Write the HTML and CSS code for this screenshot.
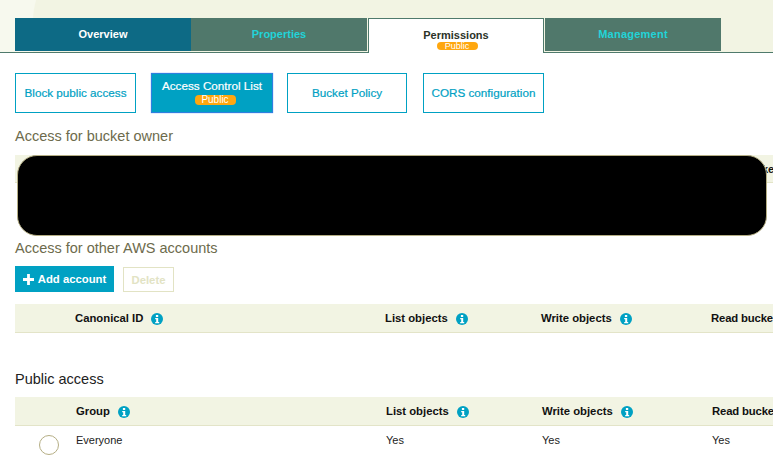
FILE: index.html
```html
<!DOCTYPE html>
<html lang="en">
<head>
<meta charset="utf-8">
<title>Permissions</title>
<link rel="stylesheet" href="styles.css">
</head>
<body>
<svg width="0" height="0" class="defs">
  <symbol id="info" viewBox="0 0 12 12">
    <circle cx="6" cy="6" r="6" fill="#00a1c3"/>
    <rect x="4.900" y="2" width="2.300" height="2" fill="#fff"/>
    <path d="M4.200 5h3v4h1v1.200H4.200V9h1V6.200H4.200z" fill="#fff"/>
  </symbol>
</svg>
<header class="band">
  <svg class="swirl" width="60" height="52" viewBox="0 0 60 52"><path d="M0 0h36C34 8 33 14 33 20V52H0z" fill="#f7f9ee"/></svg>
  <nav class="tabs">
    <a class="tab tab-blue">Overview</a>
    <a class="tab tab-green">Properties</a>
    <a class="tab tab-active">Permissions<span class="badge badge-tab">Public</span></a>
    <a class="tab tab-green tab-mgmt">Management</a>
  </nav>
</header>
<main class="content">
  <div class="subnav">
    <a class="sub sub-a">Block public access</a>
    <a class="sub sub-b sub-active">Access Control List<span class="badge">Public</span></a>
    <a class="sub sub-c">Bucket Policy</a>
    <a class="sub sub-d">CORS configuration</a>
  </div>

  <h2 class="title">Access for bucket owner</h2>
  <div class="owner">
    <div class="owner-head"><span class="owner-clip">ke</span></div>
    <div class="redact"></div>
  </div>

  <h2 class="title title-other">Access for other AWS accounts</h2>
  <div class="actions">
    <button class="btn btn-add"><svg class="plus" width="11" height="11" viewBox="0 0 11 11"><path d="M4.100 0h2.800v4.100H11v2.800H6.900V11H4.100V6.900H0V4.100h4.100z" fill="#fff"/></svg>Add account</button>
    <button class="btn btn-del">Delete</button>
  </div>
  <div class="grid grid-head">
    <span></span>
    <span class="th">Canonical ID<svg class="ico"><use href="#info"/></svg></span>
    <span class="th">List objects<svg class="ico"><use href="#info"/></svg></span>
    <span class="th">Write objects<svg class="ico"><use href="#info"/></svg></span>
    <span class="th th-clip">Read bucke</span>
  </div>

  <h2 class="title title-public">Public access</h2>
  <div class="grid grid-shift grid-head">
    <span></span>
    <span class="th">Group<svg class="ico"><use href="#info"/></svg></span>
    <span class="th">List objects<svg class="ico"><use href="#info"/></svg></span>
    <span class="th">Write objects<svg class="ico"><use href="#info"/></svg></span>
    <span class="th th-clip">Read bucke</span>
  </div>
  <div class="grid grid-shift grid-row">
    <span class="radio"></span>
    <span class="cell">Everyone</span>
    <span class="cell">Yes</span>
    <span class="cell">Yes</span>
    <span class="cell">Yes</span>
  </div>
</main>
</body>
</html>
```

FILE: styles.css
```css
* { box-sizing: border-box; }
html, body { margin: 0; height: 466px; overflow: hidden; background: #fff; }
body { font-family: "Liberation Sans", Arial, sans-serif; font-size: 11px; color: #111; }
.defs { position: absolute; }

.band { position: relative; height: 53px; background: #f2f4e3; border-bottom: 1px solid #4f7a6c; padding: 18px 0 0 15px; }
.swirl { position: absolute; left: 0; top: 0; }
.tabs { position: relative; display: flex; height: 35px; }
.tab { width: 176px; height: 33px; display: flex; flex-direction: column; align-items: center; padding-top: 10px; font-weight: 700; font-size: 11px; line-height: 13px; }
.tab-blue { background: #0d6a85; color: #fff; }
.tab-green { background: #50786b; color: #22d3d8; }
.tab-mgmt { letter-spacing: 0.25px; }
.tab-active { height: 35px; background: #fff; color: #2c3327; border: 1px solid #4f7a6c; border-bottom: 0; margin: 0 1px; width: 176px; padding-top: 10px; }

.badge { display: block; width: 41px; height: 8px; border-radius: 4px; background: #ffa70f; color: #fff; font-size: 9px; font-weight: 400; line-height: 8px; text-align: center; overflow: hidden; }
.badge-tab { margin-left: 2px; }

.content { padding: 20px 0 0 15px; width: 773px; overflow: hidden; }
.subnav { display: flex; height: 40px; }
.sub { height: 40px; border: 1px solid #00a1c3; color: #00a1c3; font-weight: 400; font-size: 11.700px; display: flex; flex-direction: column; align-items: center; justify-content: center; padding-bottom: 1px; -webkit-text-stroke: 0.2px #00a1c3; }
.sub-a { width: 121px; margin-right: 15px; }
.sub-b { width: 122px; margin-right: 14px; }
.sub-c { width: 120px; margin-right: 16px; }
.sub-d { width: 121px; }
.sub-active { background: #00a1c3; color: #fff; border-color: #2f7fe0; box-shadow: 0 0 1px #5a9cf0; -webkit-text-stroke: 0.2px #fff; padding-bottom: 3px; }
.sub-active .badge { -webkit-text-stroke: 0; margin: 3px 0 0 6px; height: 10px; line-height: 10px; font-size: 10px; }

.title { margin: 0; font-size: 14.500px; font-weight: 400; line-height: 16px; color: #6d6b4c; }
.subnav + .title { margin-top: 15px; }
.title-other { margin-top: 4px; }
.title-public { margin-top: 38px; color: #222; }

.owner { position: relative; height: 81px; margin-top: 11px; width: 758px; }
.owner-head { height: 28px; background: #f2f4e3; border-bottom: 1px solid #e3e4c8; overflow: hidden; }
.owner-clip { display: block; padding: 8px 0 0 747px; font-weight: 700; white-space: nowrap; }
.redact { position: absolute; left: 2px; top: 0; width: 750px; height: 81px; background: #000; border: 1px solid #b5ae84; border-radius: 20px; }

.actions { display: flex; align-items: flex-start; gap: 9px; margin-top: 10px; height: 26px; }
.btn { font: 700 11.300px "Liberation Sans", Arial, sans-serif; padding: 0; margin: 0; display: flex; align-items: center; justify-content: center; }
.btn-add { width: 99px; height: 26px; background: #00a1c3; color: #fff; border: 0; gap: 4px; }
.btn-del { width: 51px; height: 25px; margin-top: 1px; background: #fff; color: #e2e3c4; border: 1px solid #e2e3c4; }

.grid { display: grid; grid-template-columns: 60px 310px 156px 170px 1fr; align-items: center; white-space: nowrap; width: 758px; }
.grid-head { height: 29px; background: #f2f4e3; border-bottom: 1px solid #e3e4c8; margin-top: 12px; }
.grid-shift { grid-template-columns: 61px 310px 156px 170px 1fr; }
.title-public + .grid-head { margin-top: 10px; }
.th { display: flex; align-items: center; font-weight: 700; font-size: 11.300px; color: #111; }
.th-clip { letter-spacing: -0.15px; }
.ico { width: 12px; height: 12px; margin-left: 8px; margin-top: 1px; }
.grid-row { height: 29px; color: #222; }
.cell { margin-top: -2px; }
.radio { display: block; width: 20px; height: 20px; border: 1px solid #b5ae84; border-radius: 50%; margin: 8px 0 0 24px; }
```
